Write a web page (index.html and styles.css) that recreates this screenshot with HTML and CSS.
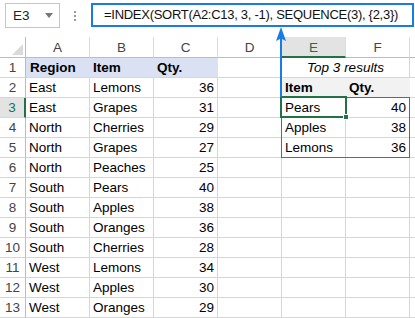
FILE: index.html
```html
<!DOCTYPE html>
<html>
<head>
<meta charset="utf-8">
<link rel="stylesheet" href="styles.css">
</head>
<body>
<div class="app">
  <div class="fbar">
    <div class="namebox"><span class="ref">E3</span><span class="caret"></span></div>
    <div class="dots"><i></i><i></i><i></i></div>
    <div class="formula">=INDEX(SORT(A2:C13, 3, -1), SEQUENCE(3), {2,3})</div>
  </div>
  <div class="sheet">
    <div class="c corner"><span class="tri"></span></div>
    <div class="c ch">A</div><div class="c ch">B</div><div class="c ch">C</div><div class="c ch">D</div><div class="c ch sel">E</div><div class="c ch">F</div><div class="c ch end"></div>

    <div class="c rh">1</div><div class="c hd">Region</div><div class="c hd">Item</div><div class="c hd">Qty.</div><div class="c"></div><div class="c title span2">Top 3 results</div><div class="c end"></div>
    <div class="c rh">2</div><div class="c">East</div><div class="c">Lemons</div><div class="c n">36</div><div class="c"></div><div class="c sub">Item</div><div class="c sub">Qty.</div><div class="c end"></div>
    <div class="c rh sel">3</div><div class="c">East</div><div class="c">Grapes</div><div class="c n">31</div><div class="c"></div><div class="c">Pears</div><div class="c n">40</div><div class="c end"></div>
    <div class="c rh">4</div><div class="c">North</div><div class="c">Cherries</div><div class="c n">29</div><div class="c"></div><div class="c">Apples</div><div class="c n">38</div><div class="c end"></div>
    <div class="c rh">5</div><div class="c">North</div><div class="c">Grapes</div><div class="c n">27</div><div class="c"></div><div class="c">Lemons</div><div class="c n">36</div><div class="c end"></div>
    <div class="c rh">6</div><div class="c">North</div><div class="c">Peaches</div><div class="c n">25</div><div class="c"></div><div class="c"></div><div class="c"></div><div class="c end"></div>
    <div class="c rh">7</div><div class="c">South</div><div class="c">Pears</div><div class="c n">40</div><div class="c"></div><div class="c"></div><div class="c"></div><div class="c end"></div>
    <div class="c rh">8</div><div class="c">South</div><div class="c">Apples</div><div class="c n">38</div><div class="c"></div><div class="c"></div><div class="c"></div><div class="c end"></div>
    <div class="c rh">9</div><div class="c">South</div><div class="c">Oranges</div><div class="c n">36</div><div class="c"></div><div class="c"></div><div class="c"></div><div class="c end"></div>
    <div class="c rh">10</div><div class="c">South</div><div class="c">Cherries</div><div class="c n">28</div><div class="c"></div><div class="c"></div><div class="c"></div><div class="c end"></div>
    <div class="c rh">11</div><div class="c">West</div><div class="c">Lemons</div><div class="c n">34</div><div class="c"></div><div class="c"></div><div class="c"></div><div class="c end"></div>
    <div class="c rh">12</div><div class="c">West</div><div class="c">Apples</div><div class="c n">30</div><div class="c"></div><div class="c"></div><div class="c"></div><div class="c end"></div>
    <div class="c rh">13</div><div class="c">West</div><div class="c">Oranges</div><div class="c n">29</div><div class="c"></div><div class="c"></div><div class="c"></div><div class="c end"></div>
  </div>
  <div class="spill"></div>
  <div class="active"><span class="handle"></span></div>
  <svg class="arrow" width="14" height="72" viewBox="0 0 14 72">
    <line x1="7" y1="10" x2="7" y2="71" stroke="#1a7be6" stroke-width="2"/>
    <polygon points="7,1 2,15 7,12.5 12,15" fill="#1a7be6"/>
  </svg>
</div>
</body>
</html>
```

FILE: styles.css
```css
* { box-sizing: border-box; }
html, body { margin: 0; padding: 0; background: #fff; }
body { width: 415px; height: 318px; overflow: hidden; font-family: "Liberation Sans", Arial, sans-serif; }
.app { position: relative; width: 415px; height: 318px; }

.fbar { height: 37px; display: flex; align-items: flex-start; padding-top: 3px; }
.namebox { margin-left: 5px; width: 55px; height: 25px; border: 1px solid #c6c6c6; display: flex; align-items: center; justify-content: space-between; padding: 0 6px 0 7px; }
.ref { font-size: 13.5px; color: #222; }
.caret { width: 0; height: 0; border-left: 4px solid transparent; border-right: 4px solid transparent; border-top: 5px solid #777; }
.dots { width: 30px; height: 25px; display: flex; flex-direction: column; align-items: center; justify-content: center; gap: 2px; }
.dots i { display: block; width: 2px; height: 2px; background: #9a9a9a; }
.formula { margin-left: 1px; width: 323px; height: 24px; border: 2px solid #1a7be6; font-size: 13px; letter-spacing: -0.28px; line-height: 20px; padding-left: 11px; color: #111; white-space: nowrap; overflow: hidden; }

.sheet { display: grid; grid-template-columns: 26px repeat(6, 64px) 1fr; grid-template-rows: 21px repeat(13, 20px); font-size: 13.5px; color: #000; }
.c { border-right: 1px solid #d6d6d6; border-bottom: 1px solid #d6d6d6; line-height: 19px; padding: 0 3px 0 3px; white-space: nowrap; overflow: hidden; }
.c.end { border-right: none; }
.ch { text-align: center; color: #444; border-bottom-color: #bcbcbc; line-height: 22px; border-right-color: #dcdcdc; }
.ch.sel { background: #e3e3e3; color: #217346; border-bottom: 2px solid #217346; }
.corner { position: relative; border-right-color: #bcbcbc; border-bottom-color: #bcbcbc; }
.tri { position: absolute; right: 2px; bottom: 2px; width: 0; height: 0; border-left: 11px solid transparent; border-bottom: 11px solid #dadada; }
.rh { text-align: center; color: #444; border-right-color: #bcbcbc; padding: 0; }
.rh.sel { background: #e3e3e3; color: #217346; border-right: 2px solid #217346; }
.hd { background: #d9e1f2; font-weight: bold; border-right-color: #d9e1f2; padding-left: 4px; }
.hd + .hd { padding-left: 3px; }
.title { grid-column: span 2; text-align: center; font-style: italic; }
.sub { background: #f2f2f2; font-weight: bold; border-right-color: #f2f2f2; }
.n { text-align: right; }

.spill { position: absolute; left: 281px; top: 97px; width: 129px; height: 61px; border: 1px solid #3d6cc0; }
.active { position: absolute; left: 280px; top: 96px; width: 67px; height: 22px; border: 2px solid #217346; }
.handle { position: absolute; right: -4px; bottom: -4px; width: 6px; height: 6px; background: #217346; border: 1px solid #fff; }
.arrow { position: absolute; left: 274px; top: 26px; }
```
